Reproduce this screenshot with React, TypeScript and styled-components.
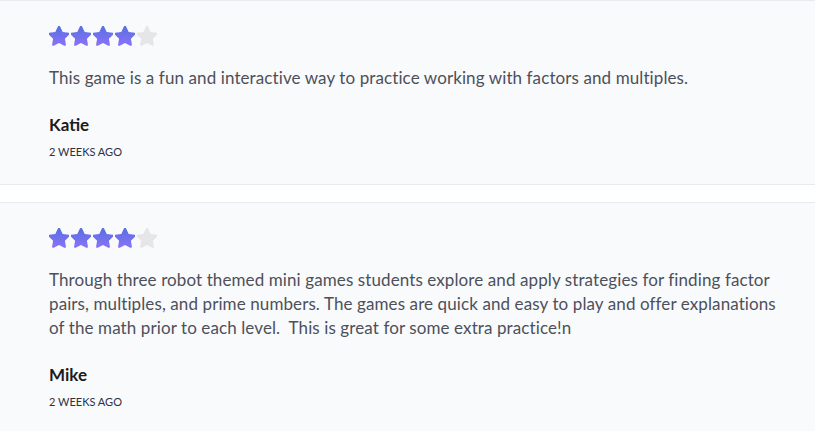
import { createGlobalStyle, styled } from "styled-components";

type Review = {
  id: number;
  rating: number;
  text: string;
  author: string;
  date: string;
};

const reviews: Review[] = [
  {
    id: 1,
    rating: 4,
    text: "This game is a fun and interactive way to practice working with factors and multiples.",
    author: "Katie",
    date: "2 weeks ago",
  },
  {
    id: 2,
    rating: 4,
    text: "Through three robot themed mini games students explore and apply strategies for finding factor pairs, multiples, and prime numbers. The games are quick and easy to play and offer explanations of the math prior to each level.\u00a0 This is great for some extra practice!n",
    author: "Mike",
    date: "2 weeks ago",
  },
];

const GlobalStyle = createGlobalStyle`
  body {
    margin: 0;
    background: #ffffff;
    font-family: Lato, "Open Sans", sans-serif;
  }
`;

const Star = ({ filled, id }: { filled: boolean; id: string }): JSX.Element => {
  return (
    <svg width="20" height="20" viewBox="2 2 20 20">
      <defs>
        <linearGradient id={id} x1="0" y1="0" x2="0" y2="1">
          <stop offset="0" stopColor="#5670df" />
          <stop offset="1" stopColor="#8b72f9" />
        </linearGradient>
      </defs>
      <path
        d="M12 1.8c.5 0 .9.3 1.1.7l2.6 5.4 5.9.8c.9.1 1.3 1.3.6 1.9l-4.3 4.1 1 5.9c.2.9-.8 1.6-1.6 1.2L12 19l-5.3 2.8c-.8.4-1.8-.3-1.6-1.2l1-5.9-4.3-4.1c-.7-.6-.3-1.8.6-1.9l5.9-.8 2.6-5.4c.2-.4.6-.7 1.1-.7z"
        fill={filled ? `url(#${id})` : "#e6e6e8"}
      />
    </svg>
  );
};

const Stars = ({ rating, prefix }: { rating: number; prefix: string }): JSX.Element => {
  return (
    <StarsS>
      {[0, 1, 2, 3, 4].map((idx) => (
        <Star key={idx} filled={idx < rating} id={`${prefix}-${idx}`} />
      ))}
    </StarsS>
  );
};

const App = (): JSX.Element => {
  return (
    <>
      <GlobalStyle />
      <ListS>
        {reviews.map((el) => (
          <CardS key={el.id}>
            <Stars rating={el.rating} prefix={`g${el.id}`} />
            <BodyS>{el.text}</BodyS>
            <AuthorS>{el.author}</AuthorS>
            <DateS>{el.date}</DateS>
          </CardS>
        ))}
      </ListS>
    </>
  );
};

export default App;

const ListS = styled.div`
  display: flex;
  flex-direction: column;
  gap: 17px;
`;

const CardS = styled.article`
  background: #f9fafc;
  border-top: 1px solid #e8eaee;
  border-bottom: 1px solid #e8eaee;
  padding: 25px 21px 24px 49px;
`;

const StarsS = styled.div`
  display: flex;
  gap: 2px;
  height: 20px;
`;

const BodyS = styled.p`
  margin: 20px 0 0;
  font-size: 17px;
  line-height: 24px;
  letter-spacing: 0.1px;
  color: #4d505a;
`;

const AuthorS = styled.h3`
  margin: 23px 0 0;
  font-size: 17px;
  line-height: 24px;
  font-weight: 700;
  color: #1b1b22;
`;

const DateS = styled.div`
  margin-top: 7px;
  font-size: 11px;
  line-height: 16px;
  text-transform: uppercase;
  color: #2f3140;
`;
